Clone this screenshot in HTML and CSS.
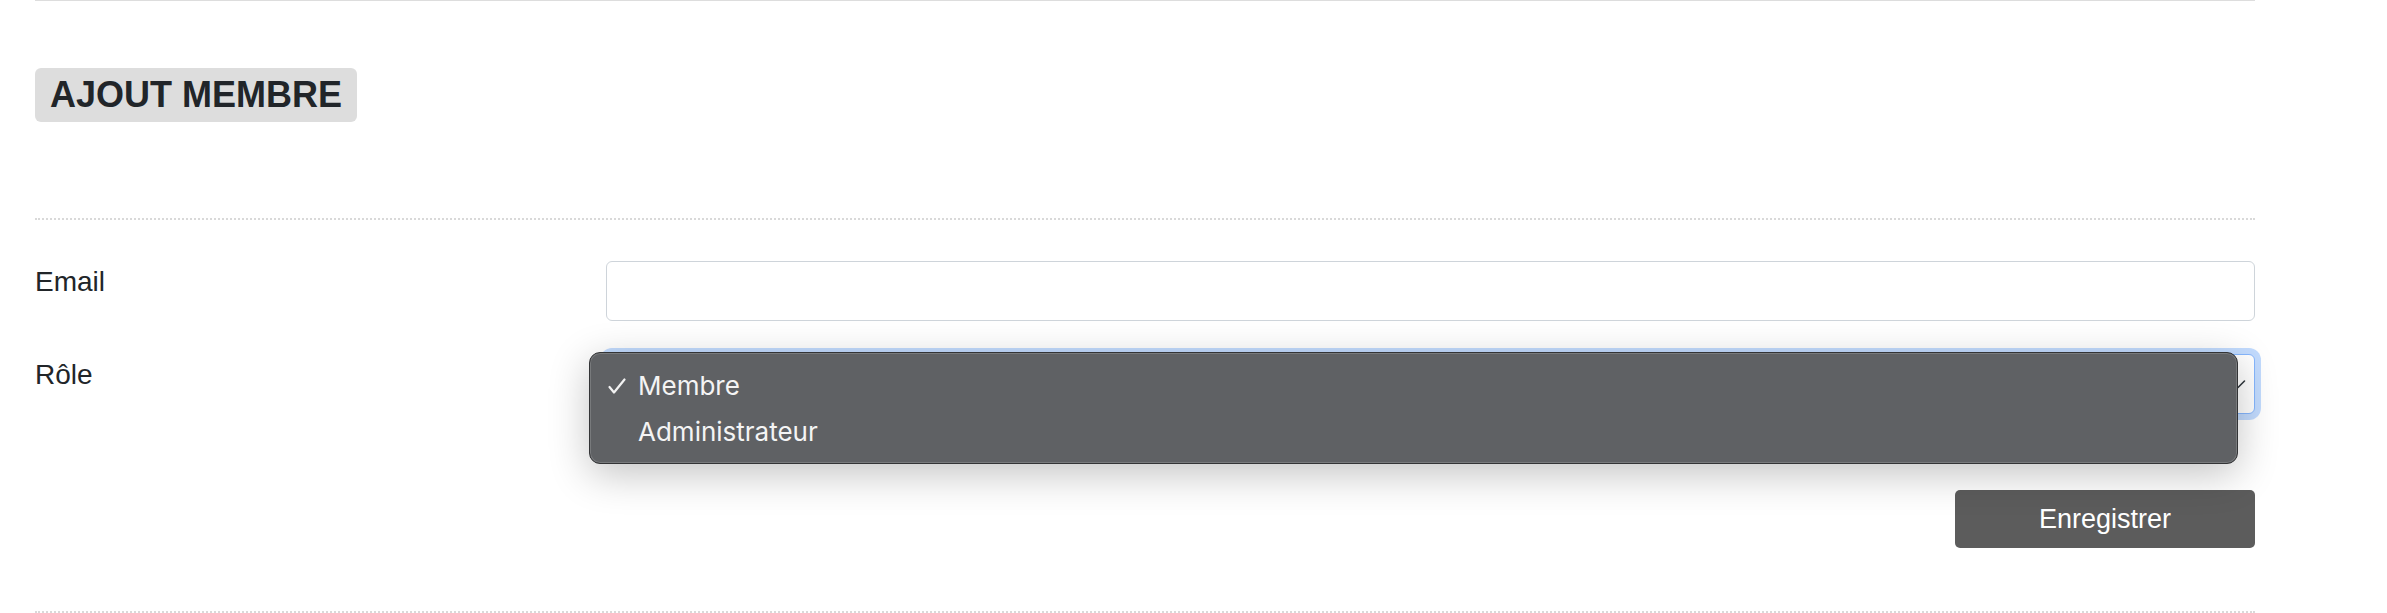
FILE: index.html
```html
<!DOCTYPE html>
<html lang="fr">
<head>
<meta charset="utf-8">
<title>Ajout membre</title>
<link rel="stylesheet" href="styles.css">
</head>
<body>
<div class="page">
  <div class="rule-solid"></div>
  <div class="head">
    <h2 class="title-badge">AJOUT MEMBRE</h2>
  </div>
  <div class="rule-dotted"></div>
  <form class="form">
    <div class="row">
      <label class="label">Email</label>
      <div class="field"><div class="input"></div></div>
    </div>
    <div class="row">
      <label class="label">Rôle</label>
      <div class="field select-wrap">
        <div class="select">
          <span class="select-value">Membre</span>
          <svg class="chevron" width="16" height="10" viewBox="0 0 16 10"><path d="M1.5 2 L8 8.5 L14.5 2" fill="none" stroke="#343a40" stroke-width="1.6" stroke-linecap="round" stroke-linejoin="round"/></svg>
        </div>
        <div class="popup">
          <div class="option">
            <span class="check"><svg width="18" height="16" viewBox="0 0 18 16"><path d="M1.5 9 L6 14.5 L16.5 1.5" fill="none" stroke="#f2f2f2" stroke-width="2.2" stroke-linecap="round" stroke-linejoin="round"/></svg></span>
            <span>Membre</span>
          </div>
          <div class="option">
            <span class="check"></span>
            <span>Administrateur</span>
          </div>
        </div>
      </div>
    </div>
    <div class="actions">
      <button type="button" class="btn">Enregistrer</button>
    </div>
  </form>
  <div class="rule-dotted"></div>
</div>
</body>
</html>
```

FILE: styles.css
```css
html, body {
  margin: 0;
  padding: 0;
  background: #ffffff;
}

body {
  font-family: "Liberation Sans", Arial, sans-serif;
  color: #212529;
}

.page {
  width: 2220px;
  margin-left: 35px;
}

.rule-solid {
  border-top: 1px solid #dddddd;
}

.head {
  padding-top: 67px;
  padding-bottom: 96px;
}

.title-badge {
  display: inline-block;
  margin: 0;
  padding: 0 15px;
  height: 54px;
  line-height: 54px;
  font-size: 36px;
  font-weight: 700;
  background: #dddddd;
  color: #212529;
  border-radius: 6px;
}

.rule-dotted {
  border-top: 2px dotted #d9d9d9;
}

.form {
  padding-top: 41px;
  padding-bottom: 63px;
}

.row {
  display: grid;
  grid-template-columns: 571px 1fr;
  margin-bottom: 33px;
}

.label {
  font-size: 28px;
  line-height: 42px;
}

.field {
  position: relative;
}

.input {
  height: 58px;
  border: 1px solid #ced4da;
  border-radius: 6px;
  background: #fff;
}

.select {
  height: 58px;
  border: 1px solid #86b7fe;
  border-radius: 6px;
  background: #fff;
  box-shadow: 0 0 0 6px rgba(13, 110, 253, 0.25);
  display: flex;
  align-items: center;
  justify-content: space-between;
  padding: 0 8px 0 20px;
  font-size: 28px;
}

.select-value {
  visibility: hidden;
}

.chevron {
  display: block;
}

.popup {
  position: absolute;
  left: -17px;
  top: -2px;
  width: 1649px;
  box-sizing: border-box;
  height: 112px;
  padding-top: 10px;
  background: #5f6164;
  border: 1px solid #333436;
  border-radius: 11px;
  box-shadow: inset 0 0 0 1px rgba(255, 255, 255, 0.16), 0 10px 40px rgba(0, 0, 0, 0.24);
  font-family: Inter, "Noto Sans", sans-serif;
  font-size: 26px;
  color: #f4f4f4;
}

.option {
  display: flex;
  align-items: center;
  height: 46px;
  line-height: 46px;
}

.check {
  display: flex;
  align-items: center;
  width: 30px;
  margin-left: 18px;
}

.actions {
  display: flex;
  justify-content: flex-end;
  padding-top: 43px;
}

.btn {
  width: 300px;
  height: 58px;
  border: 0;
  border-radius: 5px;
  background: #5c5c5c;
  color: #ffffff;
  font-family: "Liberation Sans", Arial, sans-serif;
  font-size: 27px;
  padding: 0;
}
```
